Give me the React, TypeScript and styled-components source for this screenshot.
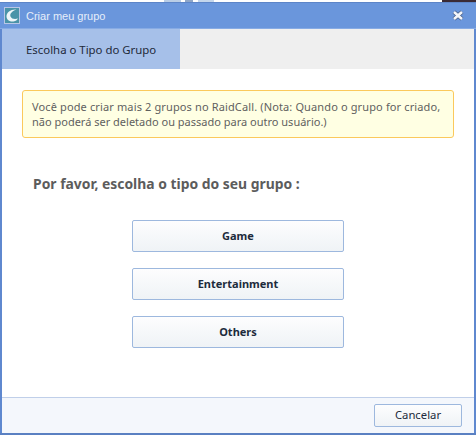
import React from "react";
import styled, { createGlobalStyle } from "styled-components";

const Global = createGlobalStyle`
  html, body { margin: 0; padding: 0; background: #fff; }
  body { width: 476px; height: 435px; overflow: hidden; font-family: "Noto Sans", "DejaVu Sans", sans-serif; }
`;

const Strip = styled.div`
  height: 2px;
  display: flex;
  background: #fff;
`;

const StripBit = styled.span<{ $w: number; $c: string; $gap: number }>`
  width: ${(p) => p.$w}px;
  margin-left: ${(p) => p.$gap}px;
  background: ${(p) => p.$c};
`;

const Win = styled.div`
  width: 476px;
  height: 433px;
  box-sizing: border-box;
  display: flex;
  flex-direction: column;
  background: #5f88cf;
  border-top: 1px solid #5d85c8;
  border-bottom: 2px solid #5a80c2;
`;

const TitleBar = styled.div`
  height: 25px;
  flex: none;
  display: flex;
  align-items: center;
  padding: 0 12px 0 4px;
  gap: 6px;
  background: #6a96dc;
  border-bottom: 1px solid #87abe4;
`;

const TitleText = styled.span`
  flex: 1;
  font-family: "Liberation Sans", sans-serif;
  font-size: 11px;
  color: #e6eefa;
`;

const Body = styled.div`
  flex: 1;
  display: flex;
  flex-direction: column;
  margin: 0 2px;
  background: #fff;
`;

const Tabs = styled.div`
  height: 40px;
  flex: none;
  background: #efefef;
`;

const Tab = styled.div`
  width: 178px;
  height: 40px;
  display: flex;
  align-items: center;
  padding-left: 24px;
  box-sizing: border-box;
  background: #a6c0e9;
  color: #1f2a3a;
  font-size: 11.4px;
`;

const Content = styled.div`
  flex: 1;
  display: flex;
  flex-direction: column;
  padding: 21px 20px 0;
`;

const Notice = styled.div`
  height: 48px;
  box-sizing: border-box;
  padding: 8px 9px;
  border: 1px solid #fbc95c;
  border-radius: 3px;
  background: #ffffe3;
  color: #5f5f5f;
  font-size: 11px;
  line-height: 15px;
  white-space: nowrap;
`;

const NoticeLead = styled.span`
  letter-spacing: 0.13px;
`;

const Prompt = styled.div`
  margin: 37px 0 0 11px;
  font-size: 13.900px;
  line-height: 18px;
  font-weight: 700;
  color: #5c5c5c;
`;

const Choices = styled.div`
  display: flex;
  flex-direction: column;
  align-items: center;
  gap: 16px;
  margin-top: 27px;
`;

const Choice = styled.button`
  width: 212px;
  height: 32px;
  margin: 0;
  padding: 0 0 2px;
  border: 1px solid #9db8de;
  border-radius: 2px;
  background: linear-gradient(#fdfdfe, #eff3f6);
  color: #1d2b3c;
  font-family: inherit;
  font-size: 11px;
  font-weight: 700;
`;

const Footer = styled.div`
  height: 34px;
  flex: none;
  display: flex;
  align-items: center;
  justify-content: flex-end;
  padding: 0 12px 1px 0;
  background: #f4f7fc;
  border-top: 1px solid #c0cfe9;
`;

const Cancel = styled.button`
  width: 88px;
  height: 23px;
  margin: 0;
  padding: 0 0 1px;
  border: 1px solid #9db8de;
  border-radius: 2px;
  background: linear-gradient(#fdfdfe, #eff3f6);
  color: #1d2b3c;
  font-family: inherit;
  font-size: 11.300px;
`;

const Logo = () => (
  <svg width="16" height="17" viewBox="0 0 16 17">
    <rect x="0.5" y="0.5" width="15" height="16" fill="#4a93a8" stroke="#b9c6e6" />
    <path d="M12.500 2.500C7 2 2.500 5 2.500 9.500c0 3.500 3.500 5.500 7 5 2.500-.4 3.500-1.500 4.500-3-3 1-6.500.5-7.500-2C5.500 6.500 8.500 4 12.500 2.500Z" fill="#eef5f8" />
  </svg>
);

const CloseIcon = () => (
  <svg width="12" height="11" viewBox="0 0 12 11">
    <path d="M2 2 10 9M10 2 2 9" stroke="#4a5f86" strokeWidth="4.200" />
    <path d="M2 2 10 9M10 2 2 9" stroke="#f4f6fa" strokeWidth="2.600" />
  </svg>
);

export default function App() {
  return (
    <>
      <Global />
      <Strip>
        <StripBit $gap={164} $w={17} $c="#b9cde6" />
        <StripBit $gap={4} $w={8} $c="#8fa6c8" />
        <StripBit $gap={5} $w={17} $c="#c4d6ec" />
        <StripBit $gap={228} $w={34} $c="#3a2a35" />
      </Strip>
      <Win>
        <TitleBar>
          <Logo />
          <TitleText>Criar meu grupo</TitleText>
          <CloseIcon />
        </TitleBar>
        <Body>
          <Tabs>
            <Tab>Escolha o Tipo do Grupo</Tab>
          </Tabs>
          <Content>
            <Notice>
              <NoticeLead>Você pode criar mais 2 grupos no RaidCall. (Nota: Quando o grupo for criado,</NoticeLead>
              <br />
              não poderá ser deletado ou passado para outro usuário.)
            </Notice>
            <Prompt>Por favor, escolha o tipo do seu grupo :</Prompt>
            <Choices>
              <Choice>Game</Choice>
              <Choice>Entertainment</Choice>
              <Choice>Others</Choice>
            </Choices>
          </Content>
          <Footer>
            <Cancel>Cancelar</Cancel>
          </Footer>
        </Body>
      </Win>
    </>
  );
}
